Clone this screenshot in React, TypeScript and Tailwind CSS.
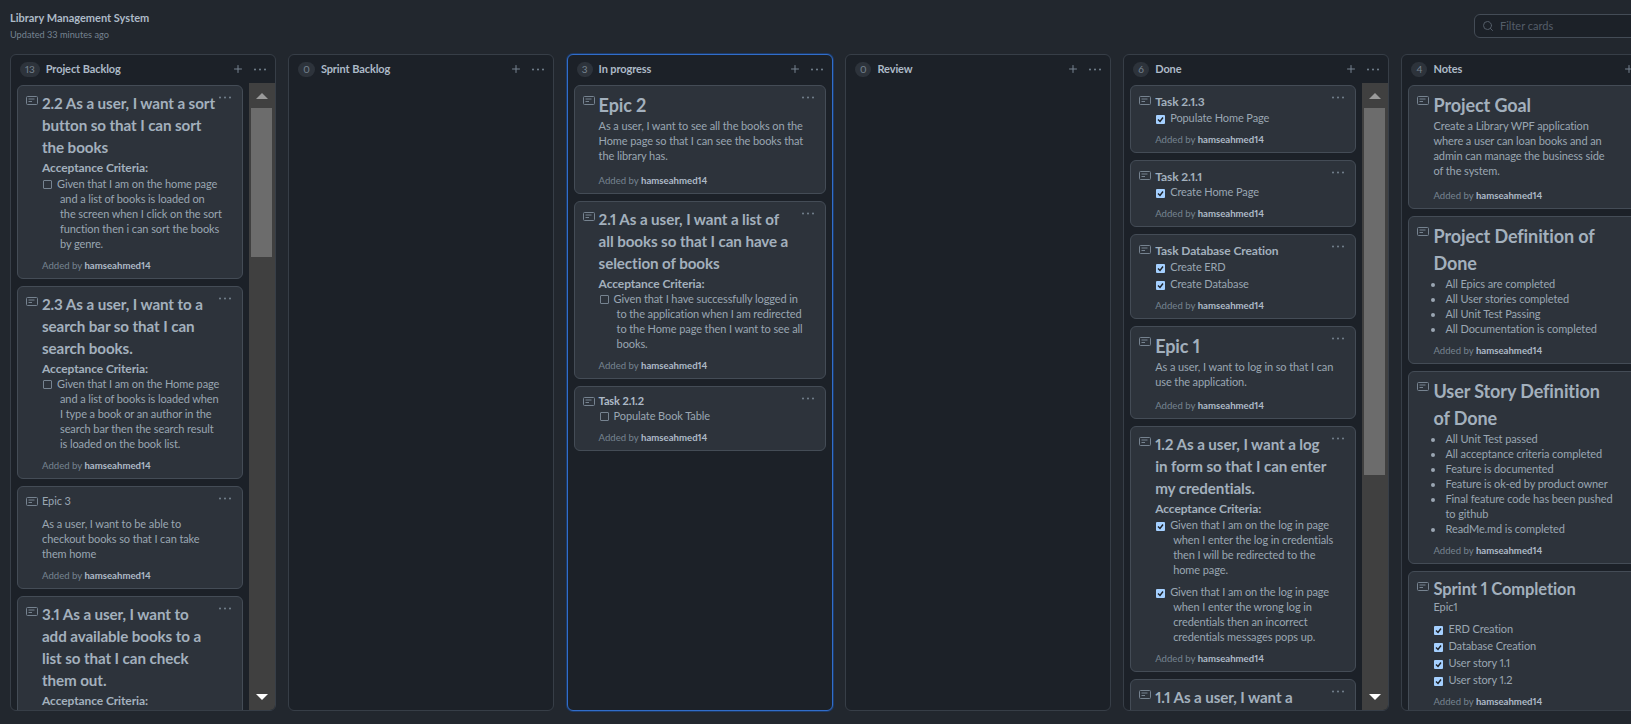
import React from 'react';
import { Plus, Search } from 'lucide-react';

function NoteIcon() {
  return (
    <svg width="12" height="9" viewBox="0 0 12 9" fill="none" className="absolute left-[8px] top-[10px] text-[#768390]">
      <rect x="0.5" y="0.5" width="11" height="8" rx="1" stroke="currentColor" />
      <path d="M2.5 3h6M2.5 5.5h3.5" stroke="currentColor" />
    </svg>
  );
}

function Dots({ className }: { className: string }) {
  return (
    <svg width="12" height="3" viewBox="0 0 12 3" fill="currentColor" className={className}>
      <circle cx="1" cy="1.5" r="1" />
      <circle cx="6" cy="1.5" r="1" />
      <circle cx="11" cy="1.5" r="1" />
    </svg>
  );
}

function CheckBox({ checked }: { checked?: boolean }) {
  if (!checked) {
    return <span className="inline-block w-[9px] h-[9px] ml-[1px] mr-[5px] border border-[#768390] rounded-[1px] bg-[#2d333b] align-[-1px]" />;
  }
  return (
    <span className="inline-flex items-center justify-center w-[9px] h-[9px] ml-[1px] mr-[5px] rounded-[1px] bg-[#a5d0ff] align-[-1px]">
      <svg width="7" height="7" viewBox="0 0 7 7" fill="none">
        <path d="M1 3.5L3 5.5L6 1.5" stroke="#1c2128" strokeWidth="1.4" />
      </svg>
    </span>
  );
}

function Task({ text, checked, last }: { text: string; checked?: boolean; last?: boolean }) {
  return (
    <div className={`pl-[18px] -indent-[18px] ${last ? '' : 'mb-[2px]'}`}>
      <CheckBox checked={checked} />
      {text}
    </div>
  );
}

function H1({ children }: { children: React.ReactNode }) {
  return <div className="text-[18px] leading-[27px] font-bold text-[#a3b0bd] -mb-[1px]">{children}</div>;
}

function H2({ children }: { children: React.ReactNode }) {
  return <div className="text-[16.5px] leading-[23px] font-bold text-[#a3b0bd] -mb-[2px]">{children}</div>;
}

function H3({ children }: { children: React.ReactNode }) {
  return <div className="text-[15.2px] leading-[22px] font-bold text-[#a3b0bd]">{children}</div>;
}

function H4({ children }: { children: React.ReactNode }) {
  return <div className="text-[12px] leading-[19px] font-bold text-[#a3b0bd] -mb-[1.5px]">{children}</div>;
}

function H5({ children }: { children: React.ReactNode }) {
  return <div className="text-[11px] leading-[15px] font-bold text-[#adbac7]">{children}</div>;
}

function Para({ children }: { children: React.ReactNode }) {
  return <p className="pb-[2.5px]">{children}</p>;
}

function Card({ children }: { children: React.ReactNode }) {
  return (
    <div className="relative shrink-0 rounded-[6px] border border-[#444c56] bg-[#2d333b] pl-[24px] pr-[14px] pt-[6px] pb-[5px] text-[11px] leading-[15px] tracking-[-0.1px] text-[#9aa6b2] whitespace-pre-line">
      <NoteIcon />
      <Dots className="absolute right-[11px] top-[10px] text-[#768390]" />
      {children}
      <div className="mt-[7px] text-[9.6px] leading-[15px] tracking-normal text-[#768390]">
        Added by <span className="font-bold text-[#adbac7]">hamseahmed14</span>
      </div>
    </div>
  );
}

type ColumnProps = {
  name: string;
  count: number;
  active?: boolean;
  thumbHeight?: number;
  children?: React.ReactNode;
};

function Column({ name, count, active, thumbHeight, children }: ColumnProps) {
  return (
    <div className={`flex flex-col shrink-0 w-[266px] h-[657px] rounded-[6px] border bg-[#1c2128] overflow-hidden ${active ? 'border-[#316dca] shadow-[0_0_0_1px_#1d3a66]' : 'border-[#373e47]'}`}>
      <div className="flex items-center h-[28px] shrink-0 pl-[9px] pr-[9px]">
        <span className="flex items-center justify-center min-w-[16px] px-[5px] h-[15px] rounded-full bg-[#2d333b] text-[10px] text-[#768390]">{count}</span>
        <span className="ml-[6px] text-[11px] tracking-[-0.1px] font-bold text-[#adbac7]">{name}</span>
        <Plus size={12} className="ml-auto text-[#768390]" />
        <Dots className="ml-[10px] text-[#768390]" />
      </div>
      <div className="flex flex-1 min-h-0">
        <div className="flex flex-col gap-[7px] flex-1 min-w-0 pl-[6px] pr-[6px] pt-[2px] overflow-hidden">
          {children}
        </div>
        {thumbHeight && (
          <div className="flex flex-col items-start shrink-0 w-[26px] bg-[#404040] relative">
            <div className="mt-[10px] ml-[7px] w-0 h-0 border-x-[6px] border-x-transparent border-b-[6px] border-b-[#9a9a9a]" />
            <div className="w-[21px] mt-[9px] ml-[2px] bg-[#6c6c6c]" style={{ height: thumbHeight }} />
            <div className="absolute bottom-[10px] left-[7px] w-0 h-0 border-x-[6px] border-x-transparent border-t-[6px] border-t-white" />
          </div>
        )}
      </div>
    </div>
  );
}

export default function App() {
  return (
    <div className="w-[1631px] h-[724px] overflow-hidden bg-[#22272e] proportional-nums font-['Lato','Noto_Sans',sans-serif]">
      <div className="flex items-start justify-between h-[54px] pl-[10px]">
        <div className="pt-[9px]">
          <div className="text-[11px] leading-[18px] font-bold text-[#adbac7]">Library Management System</div>
          <div className="text-[9.2px] leading-[14px] mt-[1px] text-[#768390]">Updated 33 minutes ago</div>
        </div>
        <div className="flex items-center gap-[6px] w-[163px] h-[24px] mt-[14px] -mr-[6px] pl-[7px] rounded-l-[6px] border border-[#444c56] bg-[#1c2128] text-[11px] text-[#545d68]">
          <Search size={12} className="text-[#545d68]" />
          Filter cards
        </div>
      </div>

      <div className="flex gap-[12.3px] pl-[10px]">
        <Column name="Project Backlog" count={13} thumbHeight={149}>
          <Card>
            <H3>{'2.2 As a user, I want a sort\nbutton so that I can sort\nthe books'}</H3>
            <H4>Acceptance Criteria:</H4>
            <Task text={'Given that I am on the home page\nand a list of books is loaded on\nthe screen when I click on the sort\nfunction then i can sort the books\nby genre.'} last />
          </Card>
          <Card>
            <H3>{'2.3 As a user, I want to a\nsearch bar so that I can\nsearch books.'}</H3>
            <H4>Acceptance Criteria:</H4>
            <Task text={'Given that I am on the Home page\nand a list of books is loaded when\nI type a book or an author in the\nsearch bar then the search result\nis loaded on the book list.'} last />
          </Card>
          <Card>
            <p className="mb-[7.5px]">Epic 3</p>
            <p>{'As a user, I want to be able to\ncheckout books so that I can take\nthem home'}</p>
          </Card>
          <Card>
            <H3>{'3.1 As a user, I want to\nadd available books to a\nlist so that I can check\nthem out.'}</H3>
            <H4>Acceptance Criteria:</H4>
          </Card>
        </Column>

        <Column name="Sprint Backlog" count={0} />

        <Column name="In progress" count={3} active>
          <Card>
            <H1>Epic 2</H1>
            <Para>{'As a user, I want to see all the books on the\nHome page so that I can see the books that\nthe library has.'}</Para>
          </Card>
          <Card>
            <H3>{'2.1 As a user, I want a list of\nall books so that I can have a\nselection of books'}</H3>
            <H4>Acceptance Criteria:</H4>
            <Task text={'Given that I have successfully logged in\nto the application when I am redirected\nto the Home page then I want to see all\nbooks.'} last />
          </Card>
          <Card>
            <H5>Task 2.1.2</H5>
            <Task text="Populate Book Table" last />
          </Card>
        </Column>

        <Column name="Review" count={0} />

        <Column name="Done" count={6} thumbHeight={367}>
          <Card>
            <H4>Task 2.1.3</H4>
            <Task text="Populate Home Page" checked last />
          </Card>
          <Card>
            <H4>Task 2.1.1</H4>
            <Task text="Create Home Page" checked last />
          </Card>
          <Card>
            <H4>Task Database Creation</H4>
            <Task text="Create ERD" checked />
            <Task text="Create Database" checked last />
          </Card>
          <Card>
            <H1>Epic 1</H1>
            <Para>{'As a user, I want to log in so that I can\nuse the application.'}</Para>
          </Card>
          <Card>
            <H3>{'1.2 As a user, I want a log\nin form so that I can enter\nmy credentials.'}</H3>
            <H4>Acceptance Criteria:</H4>
            <Task text={'Given that I am on the log in page\nwhen I enter the log in credentials\nthen I will be redirected to the\nhome page.'} checked />
            <div className="h-[5px]" />
            <Task text={'Given that I am on the log in page\nwhen I enter the wrong log in\ncredentials then an incorrect\ncredentials messages pops up.'} checked last />
          </Card>
          <Card>
            <H3>1.1 As a user, I want a</H3>
          </Card>
        </Column>

        <Column name="Notes" count={4}>
          <Card>
            <H1>Project Goal</H1>
            <Para>{'Create a Library WPF application\nwhere a user can loan books and an\nadmin can manage the business side\nof the system.'}</Para>
          </Card>
          <Card>
            <H1>{'Project Definition of\nDone'}</H1>
            <ul className="list-disc pl-[12px]">
              <li>All Epics are completed</li>
              <li>All User stories completed</li>
              <li>All Unit Test Passing</li>
              <li>All Documentation is completed</li>
            </ul>
          </Card>
          <Card>
            <H1>{'User Story Definition\nof Done'}</H1>
            <ul className="list-disc pl-[12px]">
              <li>All Unit Test passed</li>
              <li>All acceptance criteria completed</li>
              <li>Feature is documented</li>
              <li>Feature is ok-ed by product owner</li>
              <li>{'Final feature code has been pushed\nto github'}</li>
              <li>ReadMe.md is completed</li>
            </ul>
          </Card>
          <Card>
            <H2>Sprint 1 Completion</H2>
            <p className="mb-[7px]">Epic1</p>
            <Task text="ERD Creation" checked />
            <Task text="Database Creation" checked />
            <Task text="User story 1.1" checked />
            <Task text="User story 1.2" checked last />
          </Card>
        </Column>
      </div>
    </div>
  );
}
